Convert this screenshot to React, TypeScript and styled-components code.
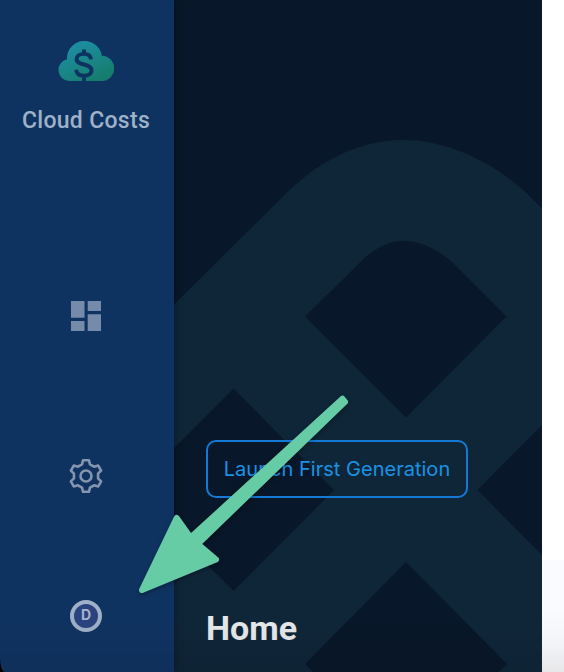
import React from "react";
import styled, { createGlobalStyle } from "styled-components";

const GlobalStyle = createGlobalStyle`
  * { box-sizing: border-box; }
  body { margin: 0; background: #fff; font-family: Inter, sans-serif; }
`;

const Screen = styled.div`
  position: relative;
  display: flex;
  width: 564px;
  height: 672px;
  overflow: hidden;
  background: #000;
`;

const Sidebar = styled.nav`
  position: relative;
  z-index: 1;
  flex: 0 0 174px;
  display: flex;
  flex-direction: column;
  align-items: center;
  padding-top: 41px;
  background: #0f3361;
  border-bottom-left-radius: 5px 14px;
  box-shadow: 2px 0 7px rgba(0, 0, 0, 0.28);
`;

const Brand = styled.div`
  display: flex;
  flex-direction: column;
  align-items: center;
  gap: 27px;
  height: 260px;
  padding-right: 2px;
`;

const BrandName = styled.div`
  font-family: Roboto, sans-serif;
  font-size: 23px;
  line-height: 26px;
  font-weight: 500;
  letter-spacing: 0.3px;
  color: #9fb1c8;
  white-space: nowrap;
`;

const NavItems = styled.div`
  display: flex;
  flex-direction: column;
  align-items: center;
  padding-right: 2px;
`;

const NavItem = styled.div<{ $height: number; $gap: number }>`
  display: flex;
  align-items: center;
  justify-content: center;
  height: ${(p) => p.$height}px;
  margin-bottom: ${(p) => p.$gap}px;
  color: #8495ad;
`;

const Avatar = styled.div`
  display: flex;
  align-items: center;
  justify-content: center;
  width: 32px;
  height: 32px;
  padding-bottom: 2px;
  border: 4px solid #9fb0c8;
  border-radius: 50%;
  background: #2a4481;
  color: #a9b4cd;
  font-size: 14px;
  line-height: 14px;
  font-weight: 700;
`;

const Main = styled.main`
  position: relative;
  flex: 0 0 368px;
  display: flex;
  flex-direction: column;
  align-items: flex-start;
  padding: 440px 0 0 32px;
  background: #081729;
`;

const Pattern = styled.svg`
  position: absolute;
  inset: 0;
`;

const LaunchButton = styled.button`
  position: relative;
  width: 262px;
  height: 58px;
  padding: 0;
  border: 2px solid #147ad6;
  border-radius: 10px;
  background: transparent;
  color: #1b92e4;
  font-family: inherit;
  font-size: 20px;
  line-height: 24px;
  letter-spacing: 0.02px;
  white-space: nowrap;
`;

const Title = styled.h1`
  position: relative;
  margin: 109px 0 0;
  font-family: Roboto, sans-serif;
  font-size: 34px;
  line-height: 42px;
  font-weight: 700;
  color: #e6e8ea;
`;

const Margin = styled.aside`
  flex: 1;
  background: linear-gradient(#fff 0 560px, #fafbff 560px, #fafbff 610px, #f4f5f9 640px, #e7e7ea 672px);
`;

const BottomShade = styled.div`
  position: absolute;
  left: 0;
  bottom: 0;
  width: 542px;
  height: 60px;
  z-index: 2;
  background: linear-gradient(rgba(0, 0, 0, 0), rgba(0, 0, 0, 0.07));
`;

const Pointer = styled.svg`
  position: absolute;
  z-index: 3;
  left: 130px;
  top: 385px;
  filter: drop-shadow(0 2px 2px rgba(0, 0, 0, 0.3));
`;

function CloudLogo() {
  return (
    <svg width="56" height="40" viewBox="0 0 56 40">
      <defs>
        <linearGradient id="cloud" x1="0.2" y1="0" x2="0.85" y2="1">
          <stop offset="0" stopColor="#1d90a8" />
          <stop offset="1" stopColor="#157b68" />
        </linearGradient>
      </defs>
      <path
        d="M11 40A11 11 0 0 1 9 18.300V17A17.500 17.500 0 0 1 43.800 14.800A12.600 12.600 0 0 1 43.500 40Z"
        fill="url(#cloud)"
      />
      <path
        d="M26 8.500V13M26 35V40M33 18.400C32.600 14.800 29.800 12.900 26 12.900C21.600 12.900 18.600 15 18.600 18.100C18.600 21.700 22 22.600 26 23.500C30.300 24.500 33.500 25.700 33.500 29.300C33.500 32.900 30.300 34.800 26 34.800C21.600 34.800 18.600 32.700 18.200 28.700"
        fill="none"
        stroke="#0f3361"
        strokeWidth="3.9"
      />
    </svg>
  );
}

function DashboardIcon() {
  return (
    <svg width="30" height="30" viewBox="0 0 30 30" fill="#768baa">
      <path d="M0 0H13.500V16.700H0ZM0 20H13.500V30H0ZM16.700 0H30V10H16.700ZM16.700 13.300H30V30H16.700Z" />
    </svg>
  );
}

const toothProfile = [
  [-4, -11.600],
  [-2.900, -15.800],
  [2.900, -15.800],
  [4, -11.600],
];

const gearPoints = Array.from({ length: 6 }, (_, i) => (i * Math.PI) / 3)
  .flatMap((a) =>
    toothProfile.map(([x, y]) => [
      x * Math.cos(a) - y * Math.sin(a),
      x * Math.sin(a) + y * Math.cos(a),
    ]),
  )
  .map(([x, y]) => `${x.toFixed(2)},${y.toFixed(2)}`)
  .join(" ");

function GearIcon() {
  return (
    <svg
      width="40"
      height="40"
      viewBox="-20 -20 40 40"
      fill="none"
      stroke="currentColor"
      strokeWidth="2.600"
      strokeLinejoin="round"
    >
      <polygon points={gearPoints} />
      <circle r="5.500" />
    </svg>
  );
}

export default function App() {
  return (
    <>
      <GlobalStyle />
      <Screen>
        <Sidebar>
          <Brand>
            <CloudLogo />
            <BrandName>Cloud Costs</BrandName>
          </Brand>
          <NavItems>
            <NavItem $height={30} $gap={125}>
              <DashboardIcon />
            </NavItem>
            <NavItem $height={40} $gap={104}>
              <GearIcon />
            </NavItem>
            <NavItem $height={32} $gap={0}>
              <Avatar>D</Avatar>
            </NavItem>
          </NavItems>
        </Sidebar>
        <Main>
          <Pattern width="368" height="672" viewBox="174 0 368 672">
            <path
              d="M174 304.500L284 195.500C313 166 354 140 404 140C454 140 502 169 529 195.500L542 208.500V672H174Z"
              fill="#0f2639"
            />
            <g fill="#081729">
              <path d="M305 316.500L360 262.500C373 249 388 241 403 241C423 241 443 252 457 267L506.500 316.500L406 417.500Z" />
              <path d="M233.500 388.500L334 490L233.500 591L174 532V448Z" />
              <path d="M542 425V555L477.500 490Z" />
              <path d="M406 562L507 664L499 672H313L305 664Z" />
            </g>
          </Pattern>
          <LaunchButton>Launch First Generation</LaunchButton>
          <Title>Home</Title>
        </Main>
        <Margin />
        <BottomShade />
        <Pointer width="230" height="220" viewBox="130 385 230 220">
          <path
            d="M342.500 398.800L345 401.800L197.800 544L216 559.500L142 590L176.700 518L190.600 537.500Z"
            fill="#66cca5"
            stroke="#66cca5"
            strokeWidth="6"
            strokeLinejoin="round"
          />
        </Pointer>
      </Screen>
    </>
  );
}
